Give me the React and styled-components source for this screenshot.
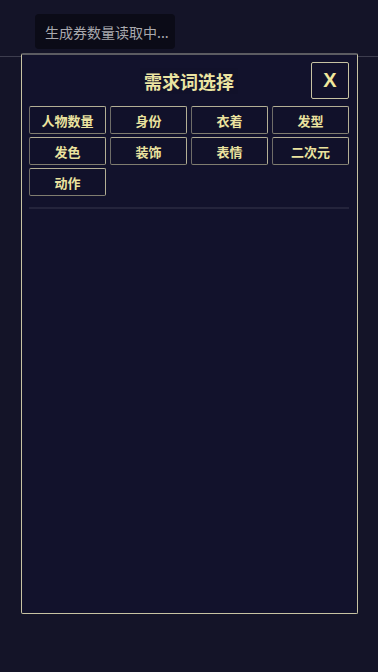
import React from 'react';
import styled, {createGlobalStyle} from 'styled-components';

const GlobalStyle = createGlobalStyle`
    html, body {
        margin: 0;
        padding: 0;
        background: #141428;
        font-family: "Noto Sans CJK SC", "Noto Sans", sans-serif;
    }
`;

const Page = styled.div`
    position: relative;
    width: 378px;
    height: 672px;
    background: #141428;
    overflow: hidden;
`;

const Header = styled.div`
    height: 57px;
    border-bottom: 1px solid #3d3d4e;
    box-sizing: border-box;
`;

const Toast = styled.div`
    position: absolute;
    left: 35px;
    top: 14px;
    width: 140px;
    height: 35px;
    box-sizing: border-box;
    padding-left: 10px;
    background: #0b0b17;
    border-radius: 4px;
    color: #a9a9ae;
    font-size: 14px;
    display: flex;
    align-items: center;
    z-index: 2;
`;

const Modal = styled.div`
    position: absolute;
    left: 21px;
    top: 53px;
    width: 337px;
    height: 561px;
    box-sizing: border-box;
    background: #12122c;
    border: 1px solid #c7c3a3;
    border-top: 2px solid #5c5c62;
    border-radius: 2px;
    padding: 7px 8px 0 7px;
    display: flex;
    flex-direction: column;
`;

const TitleRow = styled.div`
    position: relative;
    height: 38px;
    display: flex;
    align-items: center;
    justify-content: center;
`;

const Title = styled.div`
    color: #ebe4a2;
    font-size: 18px;
    font-weight: 700;
    padding: 0 4px;
    background: #11112a;
`;

const CloseButton = styled.button`
    position: absolute;
    right: 0;
    top: 0;
    width: 38px;
    height: 37px;
    box-sizing: border-box;
    background: transparent;
    border: 1px solid #c7c3a3;
    border-radius: 2px;
    color: #f0e89c;
    font-family: "Liberation Sans", sans-serif;
    font-size: 20px;
    font-weight: 700;
    padding: 0;
    cursor: pointer;
`;

const Grid = styled.div`
    margin-top: 6px;
    display: grid;
    grid-template-columns: repeat(4, 77px);
    grid-template-rows: 28px 28px 28px;
    column-gap: 4px;
    row-gap: 3px;
`;

const Tag = styled.button`
    box-sizing: border-box;
    background: #11112a;
    border: 1px solid #b3af95;
    border-left-color: #6f6d68;
    border-bottom-color: #807d70;
    border-radius: 2px;
    color: #ebe39f;
    font-family: "Noto Sans CJK SC", sans-serif;
    font-size: 13px;
    font-weight: 700;
    padding: 0;
    cursor: pointer;
`;

const Divider = styled.div`
    margin-top: 11px;
    height: 2px;
    background: #24243c;
`;

const tags = ['人物数量', '身份', '衣着', '发型', '发色', '装饰', '表情', '二次元', '动作'];

const App = () => (
    <>
        <GlobalStyle/>
        <Page>
            <Header/>
            <Toast>生成券数量读取中...</Toast>
            <Modal>
                <TitleRow>
                    <Title>需求词选择</Title>
                    <CloseButton>X</CloseButton>
                </TitleRow>
                <Grid>
                    {tags.map(t => <Tag key={t}>{t}</Tag>)}
                </Grid>
                <Divider/>
            </Modal>
        </Page>
    </>
);

export default App;
